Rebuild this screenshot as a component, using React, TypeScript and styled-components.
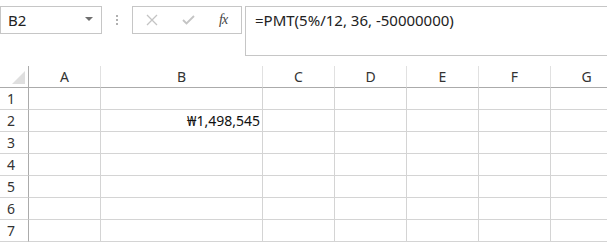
import React from "react";
import styled, { createGlobalStyle } from "styled-components";

const Global = createGlobalStyle`
  html, body { margin: 0; padding: 0; background: #ffffff; }
  body { font-family: "Noto Sans", "Noto Sans CJK KR", sans-serif; overflow: hidden; }
`;

const Page = styled.div`
  width: 607px;
  height: 247px;
  overflow: hidden;
  background: #fff;
`;

const FormulaBar = styled.div`
  display: flex;
  align-items: flex-start;
  padding-top: 6px;
  height: 66px;
  box-sizing: border-box;
`;

const NameBox = styled.div`
  width: 102px;
  height: 28px;
  box-sizing: border-box;
  border: 1px solid #c6c6c6;
  display: flex;
  align-items: center;
  justify-content: space-between;
  padding: 0 8px 0 7px;
  font-size: 15px;
  color: #222;
`;

const Caret = styled.span`
  width: 0;
  height: 0;
  border-left: 4px solid transparent;
  border-right: 4px solid transparent;
  border-top: 4px solid #6f6f6f;
  margin-top: -2px;
`;

const Grip = styled.div`
  width: 30px;
  height: 28px;
  display: flex;
  flex-direction: column;
  align-items: center;
  justify-content: center;
  gap: 2px;
  span {
    width: 2px;
    height: 2px;
    background: #b0b0b0;
  }
`;

const ButtonBox = styled.div`
  width: 110px;
  height: 28px;
  box-sizing: border-box;
  border: 1px solid #c6c6c6;
  display: flex;
  align-items: center;
  padding-left: 13px;
  gap: 24px;
`;

const Fx = styled.span`
  font-family: "Liberation Serif", serif;
  font-style: italic;
  font-size: 14px;
  color: #444;
  letter-spacing: -1px;
`;

const FormulaInput = styled.div`
  flex: 1;
  margin-left: 3px;
  height: 50px;
  box-sizing: border-box;
  border: 1px solid #c6c6c6;
  border-right: none;
  padding: 3px 0 0 9px;
  font-size: 15px;
  color: #222;
  line-height: 20px;
`;

const Grid = styled.div`
  display: grid;
  grid-template-columns: 29px 72px 162px 72px 72px 72px 72px 72px;
  grid-auto-rows: 22px;
`;

const Corner = styled.div`
  position: relative;
  border-right: 1px solid #ababab;
  border-bottom: 1px solid #ababab;
  &::after {
    content: "";
    position: absolute;
    right: 3px;
    bottom: 3px;
    width: 0;
    height: 0;
    border-left: 13px solid transparent;
    border-bottom: 13px solid #dfdfdf;
  }
`;

const ColHead = styled.div`
  border-right: 1px solid #e1e1e1;
  border-bottom: 1px solid #ababab;
  display: flex;
  align-items: center;
  justify-content: center;
  font-size: 14px;
  color: #333;
  padding-bottom: 1px;
`;

const RowHead = styled.div`
  border-right: 1px solid #ababab;
  border-bottom: 1px solid #d4d4d4;
  display: flex;
  align-items: center;
  padding-left: 7px;
  font-size: 14px;
  color: #333;
`;

const Cell = styled.div<{ $align?: string }>`
  border-right: 1px solid #d4d4d4;
  border-bottom: 1px solid #d4d4d4;
  display: flex;
  align-items: center;
  justify-content: ${(p) => (p.$align === "right" ? "flex-end" : "flex-start")};
  padding: 0 2px;
  font-size: 14px;
  color: #111;
  white-space: nowrap;
  overflow: hidden;
`;

const cols = ["A", "B", "C", "D", "E", "F", "G"];
const rows = [1, 2, 3, 4, 5, 6, 7];

const XIcon = () => (
  <svg width="12" height="12" viewBox="0 0 12 12">
    <path d="M1 1L11 11M11 1L1 11" stroke="#c4c4c4" strokeWidth="1.3" fill="none" />
  </svg>
);

const CheckIcon = () => (
  <svg width="13" height="10" viewBox="0 0 13 10">
    <path d="M1 5L4.5 8.5L12 1" stroke="#c4c4c4" strokeWidth="1.8" fill="none" />
  </svg>
);

export default function App() {
  return (
    <Page>
      <Global />
      <FormulaBar>
        <NameBox>
          <span>B2</span>
          <Caret />
        </NameBox>
        <Grip>
          <span />
          <span />
          <span />
        </Grip>
        <ButtonBox>
          <XIcon />
          <CheckIcon />
          <Fx>fx</Fx>
        </ButtonBox>
        <FormulaInput>=PMT(5%/12, 36, -50000000)</FormulaInput>
      </FormulaBar>
      <Grid>
        <Corner />
        {cols.map((c) => (
          <ColHead key={c}>{c}</ColHead>
        ))}
        {rows.map((r) => (
          <React.Fragment key={r}>
            <RowHead>{r}</RowHead>
            {cols.map((c) => (
              <Cell key={c} $align={c === "B" ? "right" : "left"}>
                {r === 2 && c === "B" ? "₩1,498,545" : ""}
              </Cell>
            ))}
          </React.Fragment>
        ))}
      </Grid>
    </Page>
  );
}
